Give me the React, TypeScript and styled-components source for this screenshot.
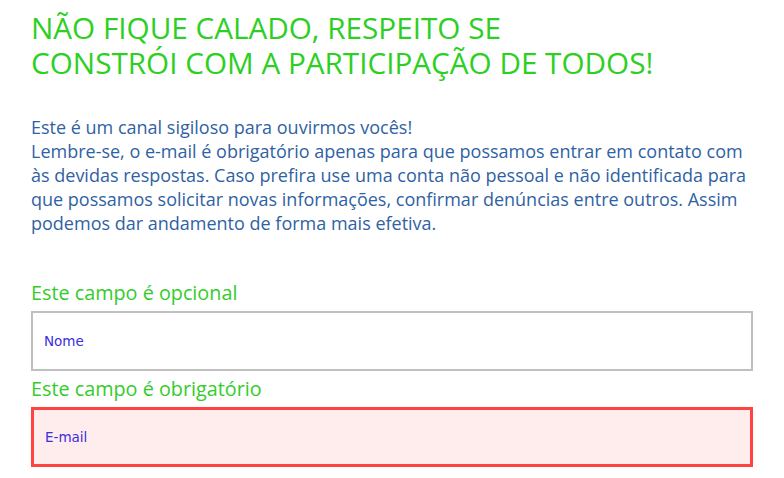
import React from 'react';
import styled, { createGlobalStyle } from 'styled-components';

const GlobalStyle = createGlobalStyle`
  html, body {
    margin: 0;
    padding: 0;
    background: #ffffff;
  }
  body {
    font-family: "Open Sans", "Liberation Sans", sans-serif;
  }
`;

const App = () => {
  return (
    <>
      <GlobalStyle />
      <Page>
        <Title>
          NÃO FIQUE CALADO, RESPEITO SE
          <br />
          CONSTRÓI COM A PARTICIPAÇÃO DE TODOS!
        </Title>
        <Intro>
          Este é um canal sigiloso para ouvirmos vocês!
          <br />
          Lembre-se, o e-mail é obrigatório apenas para que possamos entrar em contato com
          às devidas respostas. Caso prefira use uma conta não pessoal e não identificada para
          que possamos solicitar novas informações, confirmar denúncias entre outros. Assim
          podemos dar andamento de forma mais efetiva.
        </Intro>
        <Form>
          <Label htmlFor="nome">Este campo é opcional</Label>
          <Field id="nome" type="text" placeholder="Nome" />
          <Label htmlFor="email">Este campo é obrigatório</Label>
          <Field id="email" type="email" placeholder="E-mail" $invalid />
        </Form>
      </Page>
    </>
  );
};

export default App;

const Page = styled.div`
  display: flex;
  flex-direction: column;
  width: 722px;
  padding: 10px 0 0 31px;
`;

const Title = styled.h1`
  margin: 0;
  font-family: "Open Sans", "Liberation Sans", sans-serif;
  font-weight: 400;
  font-size: 29.7px;
  line-height: 35px;
  color: #2ccf22;
`;

const Intro = styled.p`
  margin: 35px 0 0;
  font-size: 18px;
  line-height: 24px;
  color: #2f62a3;
`;

const Form = styled.form`
  display: flex;
  flex-direction: column;
  margin-top: 46px;
`;

const Label = styled.label`
  font-size: 19.8px;
  line-height: 24px;
  color: #34cc2a;
  margin-bottom: 6px;
`;

const Field = styled.input<{ $invalid?: boolean }>`
  box-sizing: border-box;
  width: 100%;
  height: 60px;
  margin: 0 0 6px;
  padding: 0 ${(p) => (p.$invalid ? '11px' : '11px')};
  border: ${(p) => (p.$invalid ? '3px solid #ff4242' : '2px solid #c0c0c0')};
  border-radius: 0;
  background: ${(p) => (p.$invalid ? '#ffecec' : '#ffffff')};
  font-family: "DejaVu Sans", "Liberation Sans", sans-serif;
  font-size: 13.5px;
  color: #3a2fe0;
  outline: none;

  &::placeholder {
    color: #3a2fe0;
    opacity: 1;
  }
`;
